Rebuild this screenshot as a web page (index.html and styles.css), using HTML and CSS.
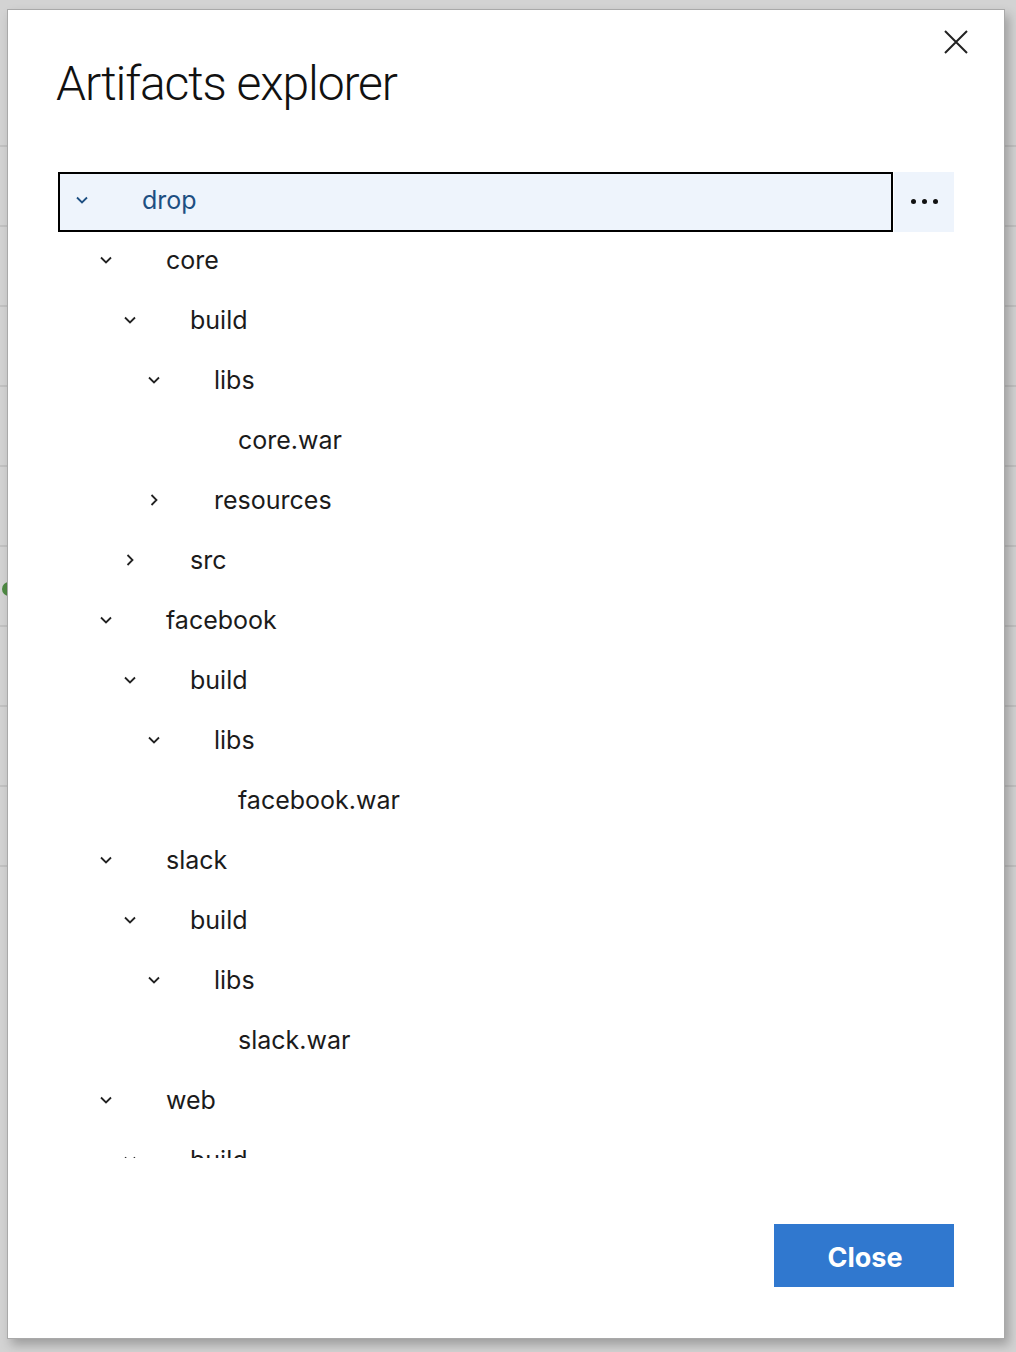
FILE: index.html
```html
<!DOCTYPE html>
<html lang="en">
<head>
<meta charset="utf-8">
<title>Artifacts explorer</title>
<link rel="stylesheet" href="styles.css">
</head>
<body>
<div class="dialog">
  <button class="dialog-close" aria-label="Close">
    <svg width="24" height="24" viewBox="0 0 24 24"><path d="M1 1 L23 23 M23 1 L1 23" stroke="#222" stroke-width="2" fill="none"/></svg>
  </button>
  <header class="dialog-header">
    <h1 class="dialog-title">Artifacts explorer</h1>
  </header>
  <div class="tree">
    <div class="tree-row selected-row">
      <div class="node selected lvl0">
        <span class="chev"><svg width="12" height="8" viewBox="0 0 12 8"><path d="M1 1.5 L6 6.5 L11 1.5" stroke="currentColor" stroke-width="1.8" fill="none"/></svg></span>
        <span class="label">drop</span>
      </div>
      <button class="more" aria-label="More"><span></span><span></span><span></span></button>
    </div>
    <div class="node lvl1"><span class="chev"><svg width="12" height="8" viewBox="0 0 12 8"><path d="M1 1.5 L6 6.5 L11 1.5" stroke="currentColor" stroke-width="1.8" fill="none"/></svg></span><span class="label">core</span></div>
    <div class="node lvl2"><span class="chev"><svg width="12" height="8" viewBox="0 0 12 8"><path d="M1 1.5 L6 6.5 L11 1.5" stroke="currentColor" stroke-width="1.8" fill="none"/></svg></span><span class="label">build</span></div>
    <div class="node lvl3"><span class="chev"><svg width="12" height="8" viewBox="0 0 12 8"><path d="M1 1.5 L6 6.5 L11 1.5" stroke="currentColor" stroke-width="1.8" fill="none"/></svg></span><span class="label">libs</span></div>
    <div class="node lvl4"><span class="chev"></span><span class="label">core.war</span></div>
    <div class="node lvl3"><span class="chev"><svg width="12" height="14" viewBox="0 0 12 14"><path d="M3.5 2 L8.5 7 L3.5 12" stroke="currentColor" stroke-width="1.8" fill="none"/></svg></span><span class="label">resources</span></div>
    <div class="node lvl2"><span class="chev"><svg width="12" height="14" viewBox="0 0 12 14"><path d="M3.5 2 L8.5 7 L3.5 12" stroke="currentColor" stroke-width="1.8" fill="none"/></svg></span><span class="label">src</span></div>
    <div class="node lvl1"><span class="chev"><svg width="12" height="8" viewBox="0 0 12 8"><path d="M1 1.5 L6 6.5 L11 1.5" stroke="currentColor" stroke-width="1.8" fill="none"/></svg></span><span class="label">facebook</span></div>
    <div class="node lvl2"><span class="chev"><svg width="12" height="8" viewBox="0 0 12 8"><path d="M1 1.5 L6 6.5 L11 1.5" stroke="currentColor" stroke-width="1.8" fill="none"/></svg></span><span class="label">build</span></div>
    <div class="node lvl3"><span class="chev"><svg width="12" height="8" viewBox="0 0 12 8"><path d="M1 1.5 L6 6.5 L11 1.5" stroke="currentColor" stroke-width="1.8" fill="none"/></svg></span><span class="label">libs</span></div>
    <div class="node lvl4"><span class="chev"></span><span class="label">facebook.war</span></div>
    <div class="node lvl1"><span class="chev"><svg width="12" height="8" viewBox="0 0 12 8"><path d="M1 1.5 L6 6.5 L11 1.5" stroke="currentColor" stroke-width="1.8" fill="none"/></svg></span><span class="label">slack</span></div>
    <div class="node lvl2"><span class="chev"><svg width="12" height="8" viewBox="0 0 12 8"><path d="M1 1.5 L6 6.5 L11 1.5" stroke="currentColor" stroke-width="1.8" fill="none"/></svg></span><span class="label">build</span></div>
    <div class="node lvl3"><span class="chev"><svg width="12" height="8" viewBox="0 0 12 8"><path d="M1 1.5 L6 6.5 L11 1.5" stroke="currentColor" stroke-width="1.8" fill="none"/></svg></span><span class="label">libs</span></div>
    <div class="node lvl4"><span class="chev"></span><span class="label">slack.war</span></div>
    <div class="node lvl1"><span class="chev"><svg width="12" height="8" viewBox="0 0 12 8"><path d="M1 1.5 L6 6.5 L11 1.5" stroke="currentColor" stroke-width="1.8" fill="none"/></svg></span><span class="label">web</span></div>
    <div class="node lvl2"><span class="chev"><svg width="12" height="8" viewBox="0 0 12 8"><path d="M1 1.5 L6 6.5 L11 1.5" stroke="currentColor" stroke-width="1.8" fill="none"/></svg></span><span class="label">build</span></div>
    <div class="node lvl3"><span class="chev"><svg width="12" height="8" viewBox="0 0 12 8"><path d="M1 1.5 L6 6.5 L11 1.5" stroke="currentColor" stroke-width="1.8" fill="none"/></svg></span><span class="label">libs</span></div>
  </div>
  <footer class="dialog-footer">
    <button class="primary">Close</button>
  </footer>
</div>
</body>
</html>
```
FILE: styles.css
```css
html, body {
  margin: 0;
  padding: 0;
}
body {
  position: relative;
  width: 1016px;
  height: 1352px;
  overflow: hidden;
  background-color: #d3d3d3;
  background-image: repeating-linear-gradient(to bottom, transparent 0, transparent 65px, #c2c2c2 65px, #c2c2c2 67px, transparent 67px, transparent 80px);
  background-size: 100% 800px;
  background-position: 0 80px;
  background-repeat: repeat-x;
  padding: 9px 0 0 7px;
  box-sizing: border-box;
  font-family: "Inter", "Liberation Sans", sans-serif;
}
body::before {
  content: "";
  position: absolute;
  left: 2px;
  top: 582px;
  width: 14px;
  height: 14px;
  border-radius: 50%;
  background: #4f8a44;
}
.dialog {
  position: relative;
  width: 998px;
  height: 1330px;
  box-sizing: border-box;
  border: 1px solid #a9a9a9;
  background: #fff;
  box-shadow: 4px 6px 10px rgba(0, 0, 0, 0.25);
  padding: 0 50px;
  display: flex;
  flex-direction: column;
}
.dialog-close {
  position: absolute;
  top: 20px;
  right: 36px;
  width: 24px;
  height: 24px;
  padding: 0;
  border: 0;
  background: none;
  display: flex;
}
.dialog-header {
  height: 162px;
  flex: none;
}
.dialog-title {
  margin: 0 0 0 -2px;
  padding-top: 46px;
  font-family: "Roboto", "Liberation Sans", sans-serif;
  font-size: 48px;
  font-weight: 300;
  line-height: 56px;
  color: #111;
  letter-spacing: -1.1px;
}
.tree {
  height: 986px;
  flex: none;
  overflow: hidden;
}
.tree-row {
  display: flex;
}
.node {
  height: 60px;
  box-sizing: border-box;
  border: 2px solid transparent;
  padding-bottom: 4px;
  display: flex;
  align-items: center;
  font-size: 25px;
  color: #1b1b1b;
}
.selected-row .node {
  flex: 1;
}
.node.selected {
  border-color: #000;
  background: #eef4fc;
  color: #1d4f82;
}
.lvl0 { padding-left: 16px; }
.lvl1 { padding-left: 40px; }
.lvl2 { padding-left: 64px; }
.lvl3 { padding-left: 88px; }
.lvl4 { padding-left: 112px; }
.chev {
  width: 12px;
  margin-right: 54px;
  display: flex;
  align-items: center;
  justify-content: center;
  color: #222;
}
.node.selected .chev { color: #1d4f82; }
.label {
  line-height: 30px;
}
.more {
  width: 60px;
  height: 60px;
  margin-left: 1px;
  border: 0;
  padding: 0 0 2px 0;
  background: #eef4fc;
  display: flex;
  align-items: center;
  justify-content: center;
  gap: 6px;
}
.more span {
  width: 5px;
  height: 5px;
  border-radius: 50%;
  background: #111;
}
.dialog-footer {
  display: flex;
  justify-content: flex-end;
  padding-top: 66px;
}
.primary {
  width: 180px;
  height: 63px;
  border: 0;
  background: #3078cf;
  color: #fff;
  font-family: "Inter", "Liberation Sans", sans-serif;
  font-size: 27px;
  font-weight: 700;
  padding: 3px 0 0 2px;
}
```
